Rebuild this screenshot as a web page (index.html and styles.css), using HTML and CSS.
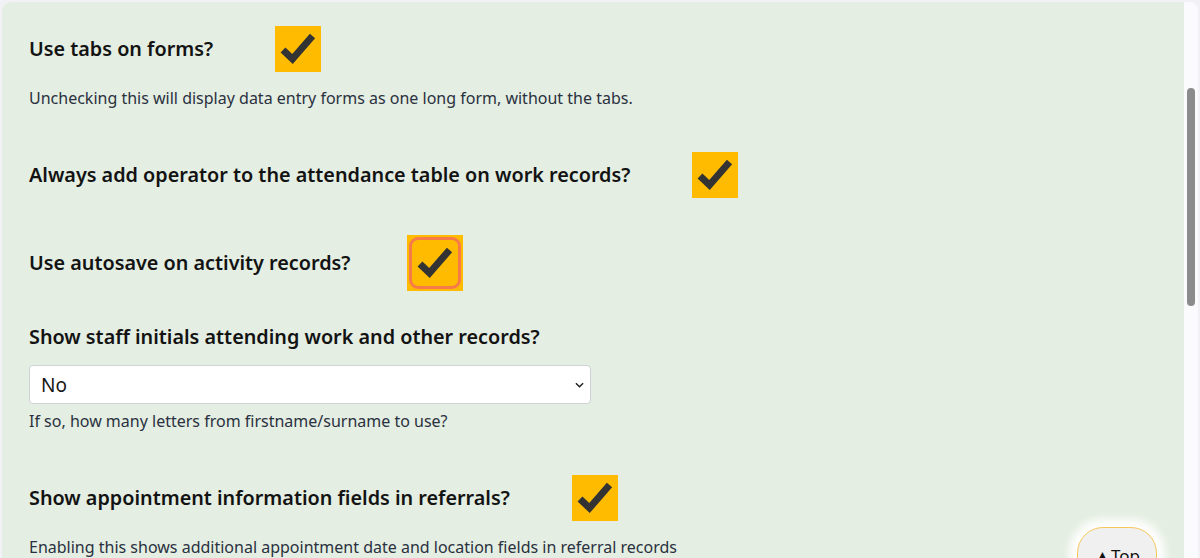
FILE: index.html
```html
<!DOCTYPE html>
<html lang="en">
<head>
<meta charset="utf-8">
<title>Settings</title>
<link rel="stylesheet" href="styles.css">
</head>
<body>
<div class="frame">
  <main class="content">
    <section class="setting">
      <div class="row">
        <label class="label">Use tabs on forms?</label>
        <span class="cb"><svg viewBox="0 0 46 46" width="46" height="46"><path d="M8 24 L17.5 33 L37.5 10" fill="none" stroke="#333" stroke-width="7"/></svg></span>
      </div>
      <p class="desc">Unchecking this will display data entry forms as one long form, without the tabs.</p>
    </section>

    <section class="setting s2">
      <div class="row">
        <label class="label">Always add operator to the attendance table on work records?</label>
        <span class="cb"><svg viewBox="0 0 46 46" width="46" height="46"><path d="M8 24 L17.5 33 L37.5 10" fill="none" stroke="#333" stroke-width="7"/></svg></span>
      </div>
    </section>

    <section class="setting s3">
      <div class="row">
        <label class="label">Use autosave on activity records?</label>
        <span class="cb focus"><svg viewBox="0 0 46 46" width="46" height="46"><path d="M8 24 L17.5 33 L37.5 10" fill="none" stroke="#333" stroke-width="7"/></svg></span>
      </div>
    </section>

    <section class="setting s4">
      <label class="label block">Show staff initials attending work and other records?</label>
      <div class="select-wrap">
        <select class="select"><option>No</option></select>
        <svg class="chev" viewBox="0 0 10 6" width="9" height="6"><path d="M1 1 L5 5 L9 1" fill="none" stroke="#222" stroke-width="1.6"/></svg>
      </div>
      <p class="help">If so, how many letters from firstname/surname to use?</p>
    </section>

    <section class="setting s5">
      <div class="row">
        <label class="label">Show appointment information fields in referrals?</label>
        <span class="cb"><svg viewBox="0 0 46 46" width="46" height="46"><path d="M8 24 L17.5 33 L37.5 10" fill="none" stroke="#333" stroke-width="7"/></svg></span>
      </div>
      <p class="desc">Enabling this shows additional appointment date and location fields in referral records</p>
    </section>

    <button class="top-btn">▲Top</button>
  </main>
  <div class="track"><div class="thumb"></div></div>
</div>
</body>
</html>
```

FILE: styles.css
```css
html, body {
  margin: 0;
  padding: 0;
  height: 558px;
  overflow: hidden;
  background: #f1f1f6;
}
body {
  font-family: "Noto Sans", "Open Sans", sans-serif;
  color: #151515;
}
.frame {
  margin: 2px 2px 0 2px;
  height: 700px;
  border-radius: 9px 9px 0 0;
  overflow: hidden;
  display: flex;
  background: #fbfbfd;
}
.content {
  flex: 1;
  background: #e4eee2;
  padding: 24px 26px 0 27px;
  position: relative;
}
.track {
  width: 14px;
  background: #fbfbfd;
  padding-top: 86px;
  box-sizing: border-box;
}
.thumb {
  width: 8px;
  margin-left: 3px;
  height: 218px;
  border-radius: 4px;
  background: #8b8b8b;
}
.setting {
  margin: 0;
}
.row {
  display: flex;
  align-items: center;
  gap: 62px;
  height: 46px;
}
.label {
  font-size: 19.8px;
  font-weight: 600;
  line-height: 26px;
  color: #131313;
}
.label.block {
  display: block;
}
.cb {
  width: 46px;
  height: 46px;
  background: #ffbb00;
  display: block;
  flex: none;
  position: relative;
}
.cb svg {
  display: block;
}
.cb.focus {
  outline: 5px solid #ffbb00;
}
.cb.focus::before {
  content: "";
  position: absolute;
  inset: -3px;
  border: 3px solid #f77b48;
  border-radius: 9px;
}
.desc, .help {
  margin: 15px 0 0 0;
  font-size: 16px;
  line-height: 22px;
  color: #2a3140;
}
.s2 { margin-top: 43px; }
.s3 { margin-top: 42px; }
.s4 { margin-top: 38px; }
.s5 { margin-top: 43px; }
.select-wrap {
  margin-top: 15px;
  width: 562px;
  position: relative;
}
.select {
  display: block;
  width: 100%;
  height: 39px;
  box-sizing: border-box;
  appearance: none;
  -webkit-appearance: none;
  background: #fff;
  border: 1px solid #cfd2d6;
  border-radius: 4px;
  padding: 0 11px;
  font-family: "Noto Sans", sans-serif;
  font-size: 19px;
  color: #151515;
}
.chev {
  position: absolute;
  right: 7px;
  top: 17px;
}
.help {
  margin-top: 6px;
}
.top-btn {
  position: absolute;
  right: 27px;
  top: 525px;
  width: 80px;
  height: 56px;
  border-radius: 26px;
  background: #f0f0f0;
  border: 1px solid #f5c85a;
  box-shadow: 0 0 10px 8px #ffffff;
  font-family: "Noto Sans", sans-serif;
  font-size: 17px;
  color: #111;
  padding: 0;
  text-align: center;
  line-height: 56px;
}
```
